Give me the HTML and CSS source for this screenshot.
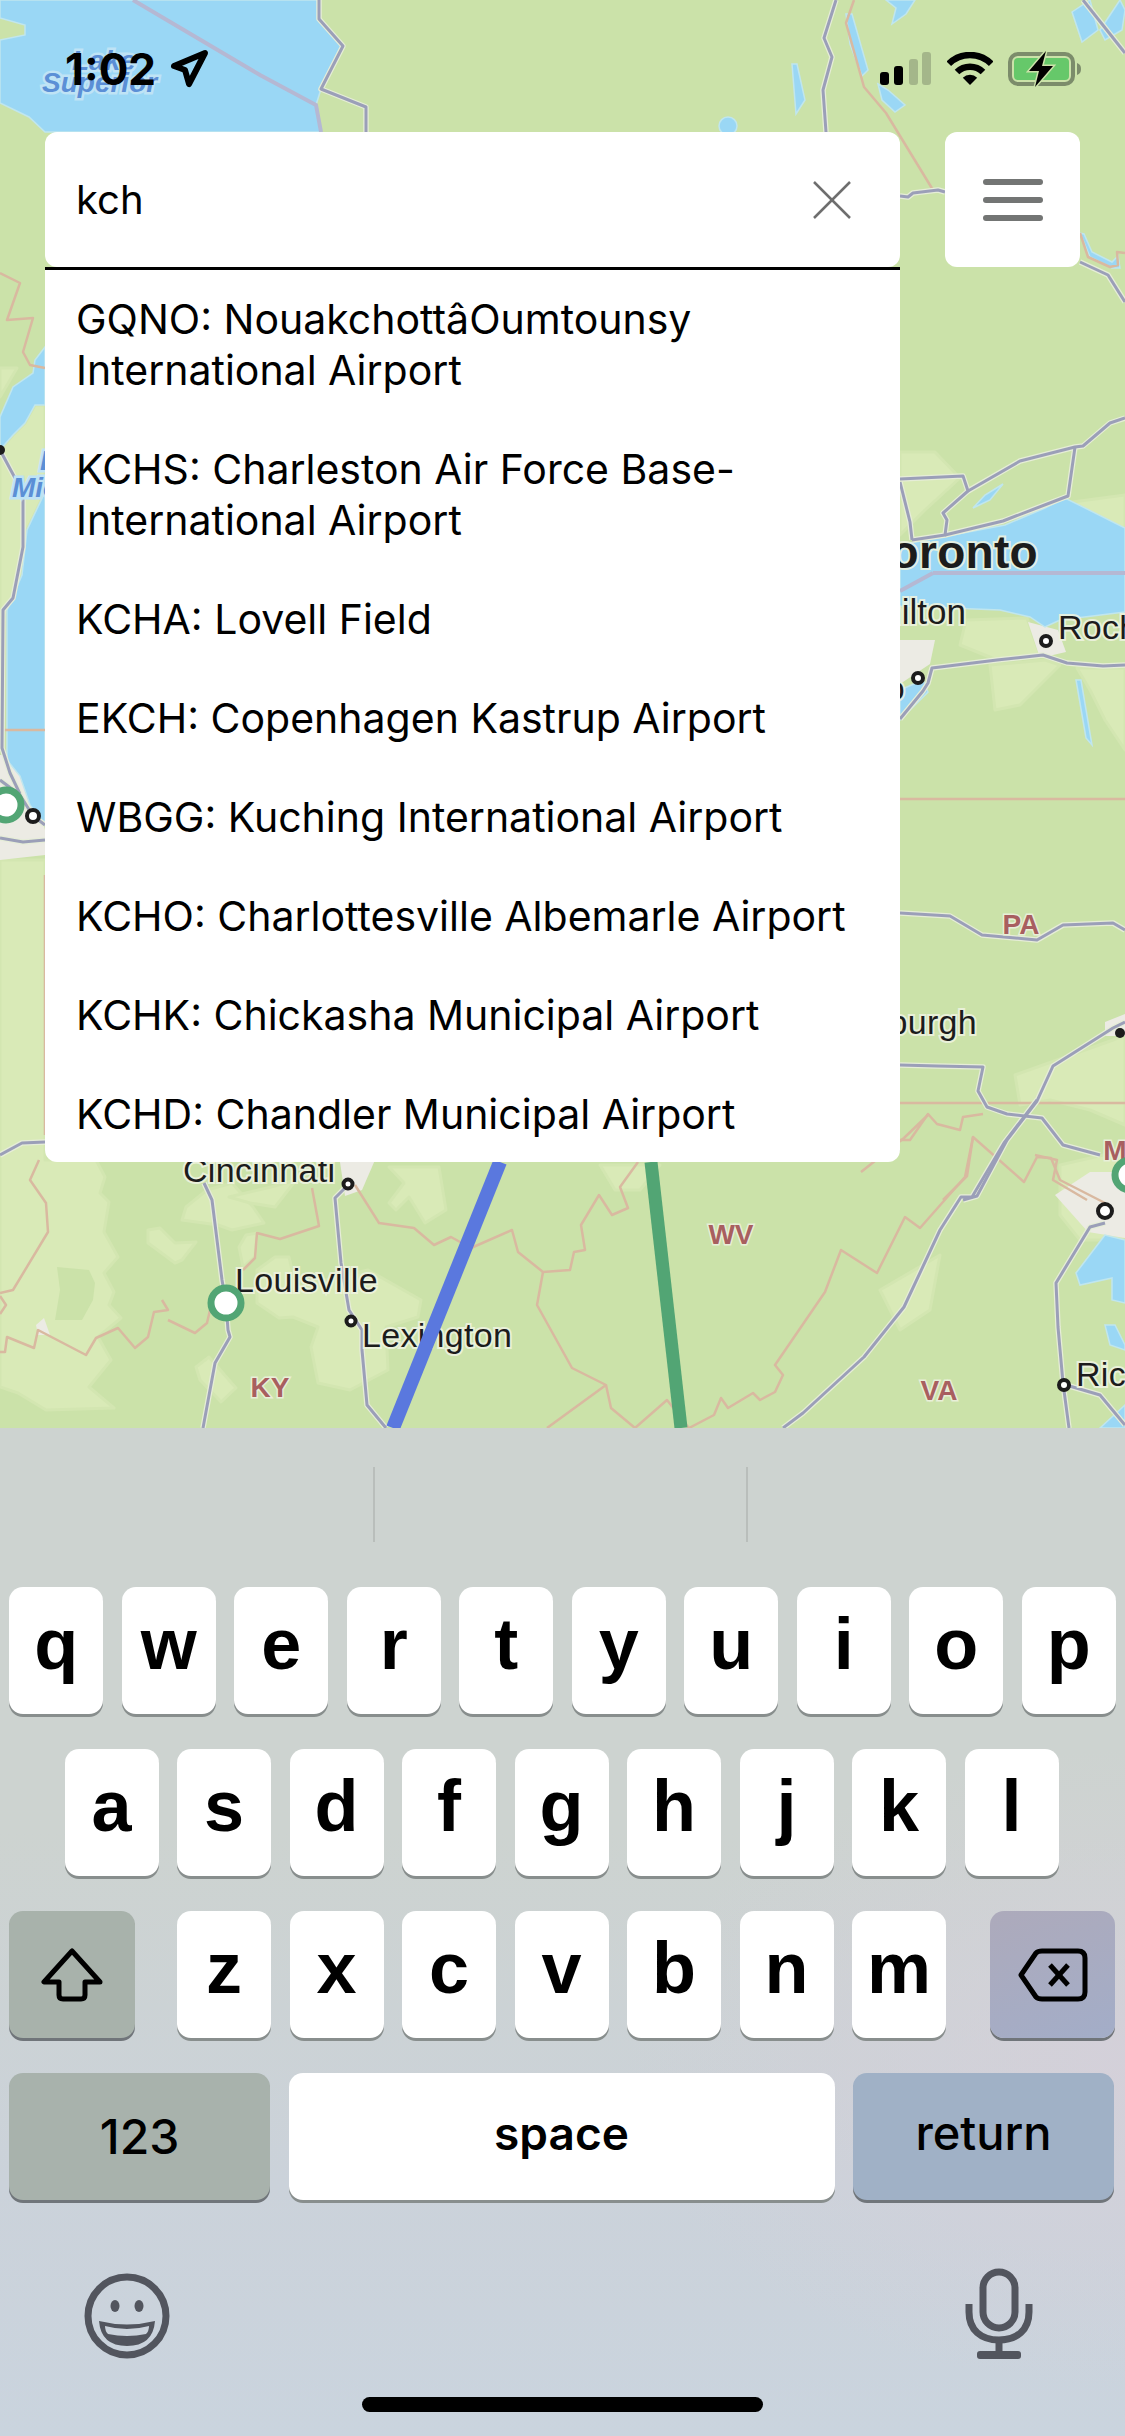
FILE: index.html
```html
<!DOCTYPE html>
<html lang="en">
<head>
<meta charset="utf-8">
<title>Airport search</title>
<link rel="stylesheet" href="styles.css">
</head>
<body>
<div class="phone">
  <section class="map">
    <svg class="map-art" viewBox="0 0 1125 1428" width="1125" height="1428">
      <defs>
        <g id="roads">
          <polyline points="319,0 319,19 343,46 321,89 366,107 366,132"/>
          <polyline points="836,0 824,38 832,57 823,90 826,132"/>
          <polyline points="1083,0 1125,53"/>
          <polyline points="900,196 908,197 913,193 938,190 945,192"/>
          <polyline points="1080,262 1108,275 1125,302"/>
          <polyline points="900,482 910,522 912,540"/>
          <polyline points="900,479 963,476 968,491 943,513 947,520 945,535 912,540"/>
          <polyline points="968,491 1020,461 1075,447 1083,446 1110,423 1125,418"/>
          <polyline points="1075,447 1068,496 1003,521 945,535"/>
          <polyline points="900,719 923,691 928,683 932,668 997,660 1043,655 1067,663 1103,666 1125,665"/>
          <polyline points="900,913 950,916 982,935 1037,940 1063,925 1113,923 1125,930"/>
          <polyline points="900,1065 937,1066 983,1067 978,1091 987,1107 1007,1114 1042,1118 1063,1145 1100,1155"/>
          <polyline points="963,1200 977,1196 1007,1140 1037,1101 1053,1066 1113,1028 1125,1022"/>
          <polyline points="0,1155 22,1143 45,1142"/>
          <polyline points="204,1183 212,1200 222,1280 226,1303 228,1330 230,1337 215,1363 203,1428"/>
          <polyline points="348,1185 335,1198 341,1263 349,1310 362,1330 362,1350 367,1405 386,1428"/>
          <polyline points="1037,1100 1004,1143 972,1197 961,1197 940,1230 904,1307 864,1357 803,1413 783,1428"/>
          <polyline points="1105,1223 1090,1227 1056,1283 1058,1327 1063,1383 1069,1428"/>
          <polyline points="1066,1385 1100,1395 1125,1425"/>
          <polyline points="0,450 15,478 23,488 23,547 13,598 3,610 2,748 10,773 20,794"/>
          <polyline points="0,838 23,842 45,840"/>
          <polyline points="0,780 20,795 33,816 45,825"/>
        </g>
      </defs>
      <rect class="land" x="0" y="0" width="1125" height="1428"/>
      <g class="light">
        <polygon points="900,452 935,452 960,478 925,510 900,535"/>
        <polygon points="1050,505 1125,495 1125,528 1085,542 1062,522"/>
        <polygon points="966,620 1027,618 1040,655 997,660 960,645"/>
        <polygon points="990,665 1045,660 1060,665 1020,705 995,710"/>
        <polygon points="1077,668 1125,668 1125,750 1105,720 1090,690"/>
        <polygon points="1015,1075 1113,1040 1125,1035 1125,1125 1090,1110 1050,1100 1020,1105"/>
        <polygon points="0,860 45,860 45,1160 96,1160 105,1177 100,1193 109,1202 104,1232 118,1257 104,1273 114,1292 109,1305 121,1318 98,1337 111,1360 89,1387 114,1408 46,1410 18,1393 0,1387"/>
        <polygon points="0,450 13,435 25,423 35,405 45,405 45,492 27,530 22,575 7,610 0,620"/>
        <polygon points="0,368 17,368 0,397"/>
        <polygon points="232,1183 253,1207 264,1223 232,1230 218,1225 182,1220 186,1207 207,1190"/>
        <polygon points="229,1197 271,1187 296,1180 275,1207 250,1203"/>
        <polygon points="148,1230 160,1228 175,1243 196,1242 182,1260 175,1263 148,1243"/>
        <polygon points="239,1247 246,1235 257,1233 255,1257 243,1267"/>
        <polygon points="257,1270 275,1257 289,1257 296,1287 368,1270 421,1300 418,1317 386,1327 388,1370 350,1390 318,1383 311,1347 318,1327 293,1317 279,1318 257,1303"/>
        <polygon points="196,1367 209,1357 236,1388 221,1402 200,1380"/>
        <polygon points="389,1167 439,1167 446,1210 425,1223 409,1197 396,1210 389,1203 404,1183"/>
        <polygon points="600,1165 660,1165 640,1190 615,1190"/>
        <polygon points="1060,1165 1125,1150 1125,1240 1080,1240 1060,1215"/>
        <polygon points="880,1290 940,1255 930,1310 900,1330"/>
      </g>
      <polygon class="land" points="57,1267 89,1270 95,1283 93,1300 82,1320 55,1320 60,1290"/>
      <g class="city">
        <polygon points="340,1162 375,1160 362,1190 345,1196"/>
        <polygon points="1055,1195 1090,1172 1125,1172 1125,1238 1088,1232"/>
        <polygon points="0,755 30,755 45,830 45,855 0,860"/>
        <polygon points="1028,622 1058,630 1066,652 1040,658"/>
        <polygon points="900,640 935,640 930,664 900,684"/>
        <polygon points="1105,1022 1125,1014 1125,1036 1105,1036"/>
        <polygon points="36,1325 44,1318 50,1335 38,1335"/>
      </g>
      <g class="water">
        <polygon points="0,0 319,0 319,19 343,46 321,89 316,105 321,132 45,132 29,117 0,103 0,40 25,35 25,25 0,18"/>
        <polygon points="45,347 35,360 33,373 13,387 0,417 0,450 13,435 25,423 35,405 45,405"/>
        <polygon points="45,492 27,530 22,575 7,610 7,760 20,776 30,805 45,825"/>
        <polygon points="900,545 1005,525 1045,508 1065,498 1125,528 1125,612 1060,620 1045,627 1030,617 1000,610 900,606"/>
        <polygon points="900,690 923,680 928,692 900,720"/>
        <polygon points="1076,680 1081,680 1092,745 1086,738"/>
        <polygon points="973,508 985,495 1003,484 990,500"/>
        <polygon points="846,14 852,14 868,70 862,76 850,44"/>
        <polygon points="878,84 888,90 905,105 895,112 882,100"/>
        <polygon points="886,0 915,0 906,14 892,24 896,8"/>
        <polygon points="792,64 797,64 805,100 796,114"/>
        <circle cx="728" cy="126" r="9"/>
        <polygon points="1072,12 1090,0 1098,30 1082,42"/>
        <polygon points="1100,30 1120,0 1125,10 1122,30 1105,40"/>
        <polygon points="1080,233 1090,257 1112,268 1120,268 1118,256 1112,262 1092,252 1084,234"/>
        <polygon points="1105,1235 1076,1273 1080,1285 1112,1278 1112,1300 1125,1303 1125,1240"/>
        <polygon points="1105,1325 1115,1325 1125,1345 1125,1350 1110,1345"/>
        <polygon points="1100,1428 1125,1405 1125,1428"/>
      </g>
      <g class="border">
        <polyline points="854,0 846,23 864,87 886,113 933,190"/>
        <polyline points="1080,233 1088,257 1110,267 1118,265 1117,252 1125,253"/>
        <polyline points="0,273 20,283 7,320 33,318 23,352 30,365 45,368"/>
        <polyline points="0,730 45,730"/>
        <polyline points="45,875 45,1135"/>
        <polyline points="900,799 1125,799"/>
        <polyline points="900,1103 1125,1103"/>
        <polyline points="900,1140 910,1140 928,1114 937,1124 960,1130 963,1117 983,1114"/>
        <polyline points="39,1160 30,1180 46,1203 48,1232 13,1290 0,1293"/>
        <polyline points="0,1296 6,1305 0,1314"/>
        <polyline points="312,1188 319,1226 280,1239 257,1233 255,1258 243,1270"/>
        <polyline points="162,1300 168,1310 154,1312 148,1337 135,1348 118,1328 96,1338 86,1355 38,1330 34,1348 7,1337 5,1352 0,1352"/>
        <polyline points="168,1320 195,1333 207,1323 210,1310"/>
        <polyline points="355,1185 379,1223 414,1228 434,1245 451,1237 471,1248 512,1230 518,1252 543,1272 570,1270 574,1252 585,1250 581,1225 599,1195 612,1215 628,1208 620,1187 638,1162"/>
        <polyline points="543,1272 537,1305 572,1368 606,1385 547,1428"/>
        <polyline points="606,1385 611,1408 635,1428 667,1400 689,1428 714,1415 721,1398 728,1408 753,1393 760,1400 775,1392 783,1375 775,1365 825,1292 841,1250 877,1273 905,1217 920,1228 965,1177 973,1137 1024,1182 1037,1157 1051,1158 1060,1180 1105,1203"/>
        <polyline points="861,1172 904,1138 929,1114"/>
        <polyline points="943,1200 967,1176 973,1137"/>
        <polyline points="1035,1155 1057,1160 1053,1180 1087,1200"/>
      </g>
      <g class="shoreline">
        <polyline points="133,0 260,75 316,105 321,132"/>
        <polyline points="933,573 1125,573"/>
        <polyline points="900,591 933,573"/>
      </g>
      <use href="#roads" class="road-halo"/>
      <use href="#roads" class="road-line"/>
      <g class="place">
        <text x="183" y="1182">Cincinnati</text>
        <text x="235" y="1292">Louisville</text>
        <text x="362" y="1347">Lexington</text>
        <text x="1076" y="1386">Ric</text>
        <text class="end tight" x="966" y="624">Hamilton</text>
        <text x="1058" y="639">Rochester</text>
        <text class="end" x="905" y="700">Buffalo</text>
        <text class="end" x="977" y="1034">Pittsburgh</text>
        <text class="end major" x="1038" y="568">Toronto</text>
      </g>
      <line class="route-blue" x1="500" y1="1162" x2="393" y2="1428"/>
      <line class="route-green" x1="651" y1="1162" x2="681" y2="1428"/>
      <g class="state">
        <text x="270" y="1397">KY</text>
        <text x="731" y="1244">WV</text>
        <text x="939" y="1400">VA</text>
        <text x="1021" y="934">PA</text>
        <text x="1125" y="1160">MD</text>
      </g>
      <g class="lake">
        <text x="72" y="70">Lake</text>
        <text x="42" y="92">Superior</text>
        <text x="40" y="470">Lake</text>
        <text x="12" y="497">Michigan</text>
      </g>
      <g class="dots">
        <circle cx="33" cy="816" r="6"/>
        <circle cx="348" cy="1184" r="4.500"/>
        <circle cx="351" cy="1321" r="4.500"/>
        <circle cx="1046" cy="641" r="5"/>
        <circle cx="918" cy="678" r="5"/>
        <circle cx="1105" cy="1211" r="7"/>
        <circle cx="1064" cy="1385" r="5"/>
      </g>
      <circle class="dot-solid" cx="1120" cy="1033" r="5"/>
      <circle class="dot-solid" cx="0" cy="450" r="5"/>
      <g class="airport">
        <circle cx="226" cy="1303" r="15"/>
        <circle cx="6" cy="805" r="15"/>
        <circle cx="1130" cy="1175" r="15"/>
      </g>
    </svg>

    <header class="status">
      <div class="status-left">
        <span class="clock">1:02</span>
        <svg class="arrow" viewBox="0 0 40 40" width="40" height="40"><polygon points="4,17 35,4 19,35 15,21"/></svg>
      </div>
      <div class="status-right">
        <svg class="cell" viewBox="0 0 52 33" width="52" height="33">
          <rect class="on" x="0" y="20" width="9" height="13" rx="3"/>
          <rect class="on" x="14" y="14" width="9" height="19" rx="3"/>
          <rect class="off" x="29" y="7" width="9" height="26" rx="3"/>
          <rect class="off" x="42" y="0" width="9" height="33" rx="3"/>
        </svg>
        <svg class="wifi" viewBox="0 0 46 33" width="46" height="33">
          <path d="M1.800 11.800 A 30 30 0 0 1 44.200 11.800"/>
          <path d="M10 20 A 18.500 18.500 0 0 1 36 20"/>
          <path class="wifi-core" d="M23 33 L15.800 25.800 A 10.200 10.200 0 0 1 30.200 25.800 Z"/>
        </svg>
        <svg class="battery" viewBox="0 0 74 36" width="74" height="36">
          <rect class="shell" x="2" y="3" width="63" height="30" rx="8"/>
          <rect class="charge" x="6" y="7" width="55" height="22" rx="4"/>
          <path class="nub" d="M69 12 C72 13 73 15 73 18 C73 21 72 23 69 24 Z"/>
          <polygon class="bolt" points="38,0 21,20 31,20 27,36 45,15 34,15"/>
        </svg>
      </div>
    </header>

    <div class="search">
      <div class="search-panel">
        <div class="search-field">
          <span class="query">kch</span>
          <svg class="clear" viewBox="0 0 38 38" width="38" height="38"><line x1="1" y1="1" x2="37" y2="37"/><line x1="37" y1="1" x2="1" y2="37"/></svg>
        </div>
        <ul class="results">
          <li>GQNO: NouakchottâOumtounsy International Airport</li>
          <li>KCHS: Charleston Air Force Base-International Airport</li>
          <li>KCHA: Lovell Field</li>
          <li>EKCH: Copenhagen Kastrup Airport</li>
          <li>WBGG: Kuching International Airport</li>
          <li>KCHO: Charlottesville Albemarle Airport</li>
          <li>KCHK: Chickasha Municipal Airport</li>
          <li>KCHD: Chandler Municipal Airport</li>
        </ul>
      </div>
      <button class="menu" aria-label="Menu"><i></i><i></i><i></i></button>
    </div>
  </section>

  <section class="keyboard">
    <div class="predict"><span></span><span></span><span></span></div>
    <div class="rows">
      <div class="row">
        <span class="key">q</span><span class="key">w</span><span class="key">e</span><span class="key">r</span><span class="key">t</span><span class="key">y</span><span class="key">u</span><span class="key">i</span><span class="key">o</span><span class="key">p</span>
      </div>
      <div class="row row-home">
        <span class="key">a</span><span class="key">s</span><span class="key">d</span><span class="key">f</span><span class="key">g</span><span class="key">h</span><span class="key">j</span><span class="key">k</span><span class="key">l</span>
      </div>
      <div class="row row-split">
        <span class="key key-fn key-shift">
          <svg viewBox="0 0 62 54" width="62" height="54"><path d="M31 3 L3 34 H18 V47 Q18 51 22 51 H40 Q44 51 44 47 V34 H59 Z"/></svg>
        </span>
        <div class="letters">
          <span class="key">z</span><span class="key">x</span><span class="key">c</span><span class="key">v</span><span class="key">b</span><span class="key">n</span><span class="key">m</span>
        </div>
        <span class="key key-fn key-delete">
          <svg viewBox="0 0 70 54" width="70" height="54"><path d="M3 27 L18 5 Q20 3 24 3 H60 Q67 3 67 10 V44 Q67 51 60 51 H24 Q20 51 18 49 Z"/><line x1="32" y1="17" x2="50" y2="37"/><line x1="50" y1="17" x2="32" y2="37"/></svg>
        </span>
      </div>
      <div class="row row-bottom">
        <span class="key key-fn key-123">123</span>
        <span class="key key-space">space</span>
        <span class="key key-fn key-return">return</span>
      </div>
    </div>
    <div class="tools">
      <svg class="emoji" viewBox="0 0 88 88" width="88" height="88">
        <circle class="face" cx="44" cy="44" r="39"/>
        <ellipse class="eye" cx="32" cy="34" rx="4.500" ry="6"/>
        <ellipse class="eye" cx="56" cy="34" rx="4.500" ry="6"/>
        <path class="mouth" d="M16 49 Q44 56 72 49 Q70 74 44 74 Q18 74 16 49 Z"/>
        <path class="teeth" d="M22 54 Q44 60 66 54 Q66 59 63 62 Q44 66 25 62 Q22 59 22 54 Z"/>
      </svg>
      <svg class="mic" viewBox="0 0 68 96" width="68" height="96">
        <rect class="capsule" x="18" y="4" width="32" height="56" rx="16"/>
        <path class="stand" d="M4 36 V44 C4 62 16 72 34 72 C52 72 64 62 64 44 V36"/>
        <line class="stand" x1="34" y1="72" x2="34" y2="86"/>
        <rect class="base" x="12" y="83" width="44" height="8" rx="3"/>
      </svg>
    </div>
    <div class="home"></div>
  </section>
</div>
</body>
</html>
```

FILE: styles.css
```css
* { box-sizing: border-box; }
html, body { margin: 0; padding: 0; }
body { width: 1125px; height: 2436px; overflow: hidden; background: #cdd3d0; font-family: "Liberation Sans", Arial, sans-serif; }
.phone { width: 1125px; height: 2436px; display: flex; flex-direction: column; }

/* map */
.map { position: relative; height: 1428px; flex: none; overflow: hidden; }
.map-art { position: absolute; inset: 0; display: block; }
.land { fill: #cbe2a9; }
.light polygon { fill: #d9eab7; stroke: #d3e6b1; stroke-width: 3; stroke-linejoin: round; }
.city polygon { fill: #ecebe4; }
.water polygon, .water circle { fill: #9ad7f5; stroke: #c0e6ee; stroke-width: 1.500; }
.border polyline { fill: none; stroke: #d9b9a0; stroke-width: 2.500; stroke-linejoin: round; }
.shoreline polyline { fill: none; stroke: #b5b8d3; stroke-width: 4; }
.road-halo { fill: none; stroke: #e6edd8; stroke-width: 5.500; stroke-linejoin: round; }
.road-line { fill: none; stroke: #9b9fb8; stroke-width: 3; stroke-linejoin: round; }
.route-blue { stroke: #5a78de; stroke-width: 14; }
.route-green { stroke: #52a574; stroke-width: 13; }
.place text { font-size: 34px; letter-spacing: 0.3px; fill: #1c1c1c; stroke: #eef3e0; stroke-width: 4px; paint-order: stroke; stroke-opacity: 0.9; }
.place .end { text-anchor: end; }
.place .tight { font-size: 35px; letter-spacing: 0; }
.place .major { font-size: 46px; font-weight: 700; }
.state text { font-size: 28px; font-weight: 700; fill: #a85f5f; stroke: #e8efd8; stroke-width: 3px; paint-order: stroke; text-anchor: middle; }
.lake text { font-size: 28px; font-weight: 700; font-style: italic; fill: #5b8fd6; stroke: #bfe3f5; stroke-width: 5px; paint-order: stroke; }
.dots circle { fill: #fff; stroke: #1c1c1c; stroke-width: 4; }
.dot-solid { fill: #1c1c1c; }
.airport circle { fill: #fff; stroke: #52a574; stroke-width: 7; }

/* status bar */
.status { position: absolute; left: 65px; right: 43px; top: 44px; display: flex; justify-content: space-between; align-items: flex-start; }
.status-left { display: flex; align-items: center; gap: 14px; }
.clock { font-family: Inter, sans-serif; font-size: 44px; font-weight: 700; line-height: 50px; color: #000; }
.arrow { fill: none; stroke: #000; stroke-width: 6; stroke-linejoin: round; }
.status-right { display: flex; align-items: flex-start; gap: 15px; padding-top: 8px; }
.cell .on { fill: #000; }
.cell .off { fill: #a4b68a; }
.wifi path { fill: none; stroke: #000; stroke-width: 6.500; }
.wifi .wifi-core { fill: #000; stroke: none; }
.battery { margin-top: -1px; }
.shell { fill: none; stroke: #7c8c6b; stroke-width: 4; }
.charge { fill: #66c86a; }
.nub { fill: #7c8c6b; }
.bolt { fill: #000; stroke: #cbe2a9; stroke-width: 3; paint-order: stroke; }

/* search */
.search { position: absolute; left: 45px; top: 132px; width: 1035px; display: flex; justify-content: space-between; align-items: flex-start; }
.search-panel { width: 855px; }
.search-field { height: 135px; background: #fff; border-radius: 12px; display: flex; align-items: center; justify-content: space-between; padding: 0 49px 0 31px; }
.query { font-family: Inter, sans-serif; font-size: 40px; color: #000; }
.clear line { stroke: #6e6e6e; stroke-width: 2.500; }
.results { list-style: none; margin: 3px 0 0; padding: 0; height: 892px; overflow: hidden; background: #fff; position: relative; border-radius: 0 0 12px 12px; box-shadow: 0 -3px 0 #000; }
.results li { padding: 24px 31px; font-family: Inter, sans-serif; font-size: 41px; line-height: 51px; color: #000; }
.menu { width: 135px; height: 135px; padding: 0; border: 0; background: #fff; border-radius: 12px; display: flex; flex-direction: column; align-items: center; justify-content: center; gap: 12px; }
.menu i { display: block; width: 60px; height: 6px; border-radius: 3px; background: #737574; }

/* keyboard */
.keyboard { position: relative; flex: 1; background:
  radial-gradient(ellipse 500px 320px at 1125px 640px, rgba(214, 208, 218, 0.8), rgba(214, 208, 218, 0)),
  linear-gradient(180deg, #cdd3d0 0%, #cdd3d0 40%, #cbd2da 75%, #cad4de 100%);
}
.predict { height: 159px; display: grid; grid-template-columns: 373px 375px 1fr; }
.predict span { height: 75px; margin-top: 39px; }
.predict span:nth-child(2) { border-left: 2px solid #b9bebb; border-right: 2px solid #b9bebb; }
.rows { display: flex; flex-direction: column; gap: 35px; }
.row { display: flex; justify-content: center; gap: 18.500px; height: 127px; }
.row-home { padding-right: 2px; }
.row-split { justify-content: space-between; padding: 0 10px 0 9px; }
.row-bottom { justify-content: space-between; padding: 0 11px 0 9px; }
.letters { display: flex; gap: 18.500px; margin-left: -2px; }
.key { width: 94px; height: 127px; flex: none; display: flex; align-items: center; justify-content: center; background: #fff; border-radius: 14px; box-shadow: 0 3px 0 #888e8d; font-family: "Liberation Sans", Arial, sans-serif; font-size: 72px; font-weight: 700; line-height: 1; padding-bottom: 13px; color: #000; }
.key-fn { box-shadow: 0 3px 0 #70757a; font-size: 48px; font-weight: 400; padding-bottom: 0; }
.key-shift { width: 126px; background: #a8b2ab; }
.key-delete { width: 125px; background: linear-gradient(160deg, #adaabb, #a3adc8); }
.key-shift svg, .key-delete svg { fill: none; stroke: #000; stroke-width: 5; stroke-linejoin: round; }
.key-123 { width: 261px; background: #a8b2ac; font-family: Inter, sans-serif; font-weight: 500; }
.key-space { width: 546px; font-family: Inter, sans-serif; font-size: 46px; font-weight: 600; padding-bottom: 8px; }
.key-return { width: 261px; background: #a0b1c6; font-family: Inter, sans-serif; font-size: 47px; font-weight: 500; padding-bottom: 8px; }
.tools { display: flex; justify-content: space-between; align-items: flex-start; padding: 68px 92px 0 83px; }
.emoji { margin-top: 4px; }
.face { fill: none; stroke: #52555e; stroke-width: 7; }
.eye, .mouth, .base { fill: #52555e; }
.teeth { fill: #cbd3dc; }
.capsule, .stand { fill: none; stroke: #52555e; stroke-width: 7; }
.home { position: absolute; left: 362px; top: 969px; width: 401px; height: 15px; border-radius: 8px; background: #000; }
```
